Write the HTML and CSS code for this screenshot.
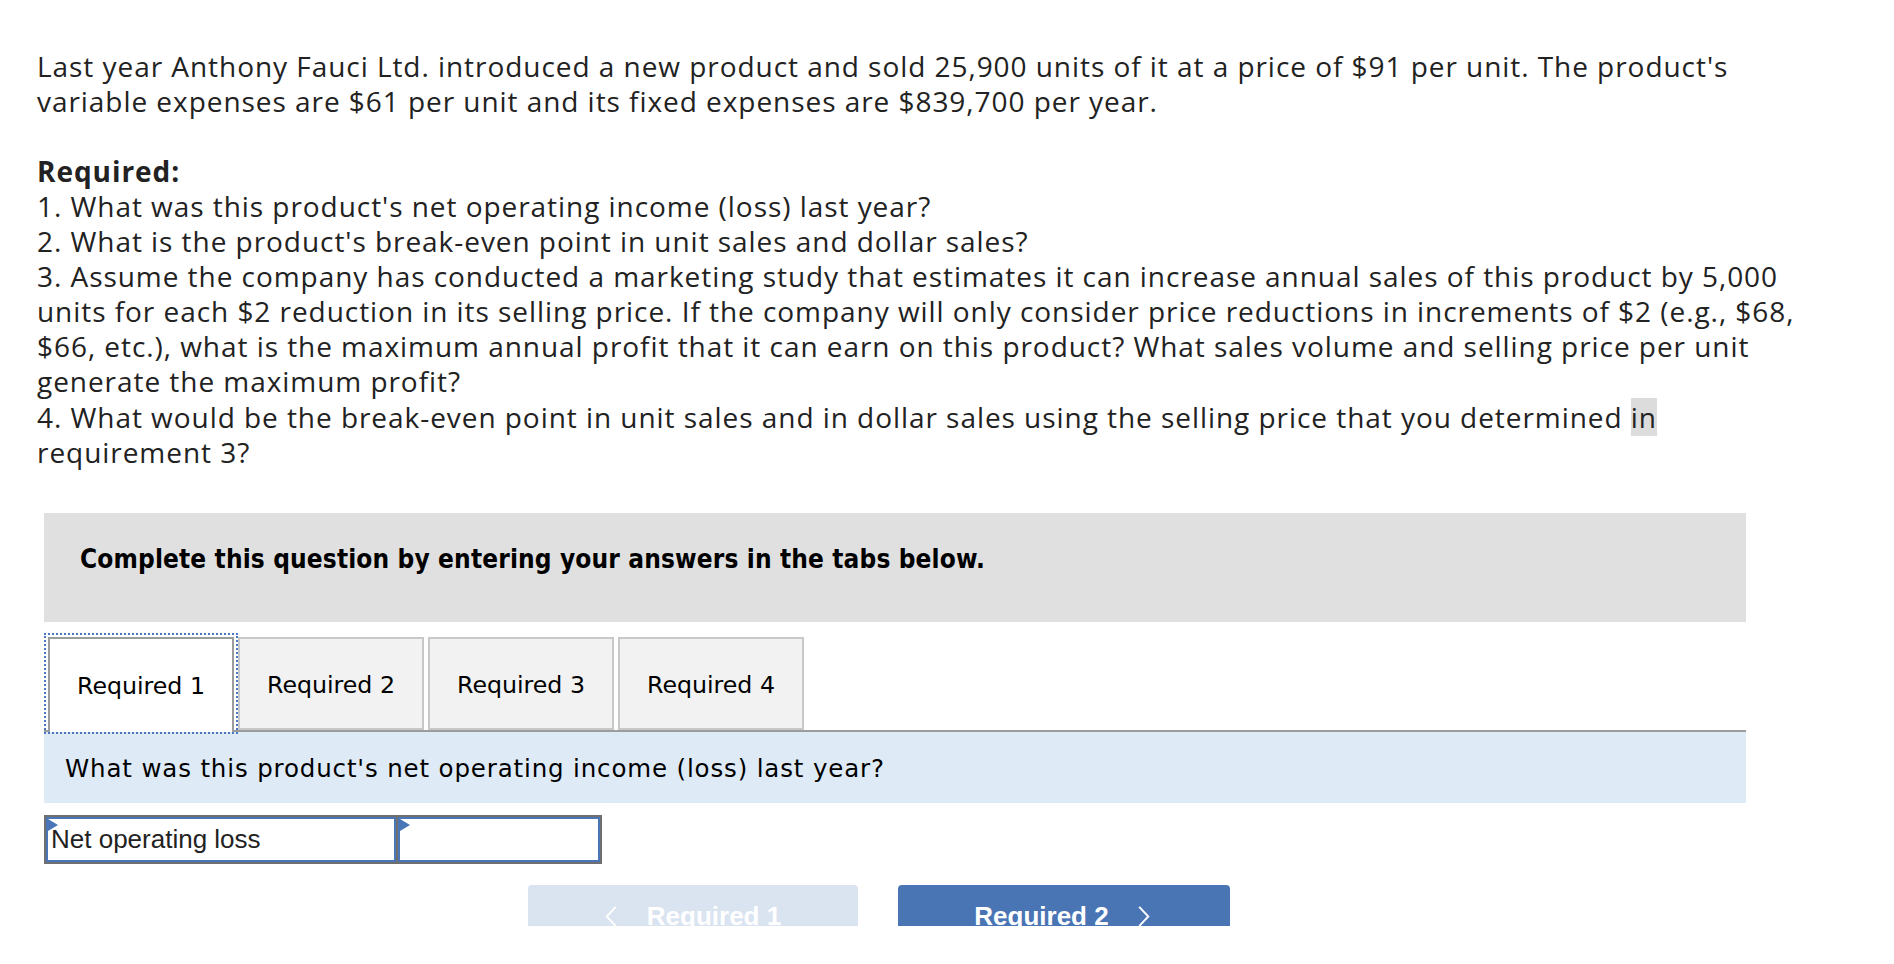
FILE: index.html
```html
<!DOCTYPE html>
<html lang="en">
<head>
<meta charset="utf-8">
<title>Break-even question</title>
<link rel="stylesheet" href="styles.css">
</head>
<body>
<div class="page">
  <div class="question">
    <p class="intro">Last year Anthony Fauci Ltd. introduced a new product and sold 25,900 units of it at a price of $91 per unit. The product's<br>variable expenses are $61 per unit and its fixed expenses are $839,700 per year.</p>
    <p class="req"><strong>Required:</strong><br>1. What was this product's net operating income (loss) last year?<br>2. What is the product's break-even point in unit sales and dollar sales?<br>3. Assume the company has conducted a marketing study that estimates it can increase annual sales of this product by 5,000<br>units for each $2 reduction in its selling price. If the company will only consider price reductions in increments of $2 (e.g., $68,<br>$66, etc.), what is the maximum annual profit that it can earn on this product? What sales volume and selling price per unit<br>generate the maximum profit?<br>4. What would be the break-even point in unit sales and in dollar sales using the selling price that you determined <span class="hl">in</span><br>requirement 3?</p>
  </div>
  <div class="answer">
    <div class="instr">Complete this question by entering your answers in the tabs below.</div>
    <div class="tabs">
      <div class="tab active">Required 1</div>
      <div class="tab">Required 2</div>
      <div class="tab">Required 3</div>
      <div class="tab">Required 4</div>
    </div>
    <div class="prompt">What was this product's net operating income (loss) last year?</div>
    <div class="entry">
      <div class="cell label"><svg class="flag" viewBox="0 0 10 12"><polygon points="0,0 10,6 0,12" fill="#4a76b8"/></svg>Net operating loss</div>
      <div class="cell value"><svg class="flag" viewBox="0 0 10 12"><polygon points="0,0 10,6 0,12" fill="#4a76b8"/></svg></div>
    </div>
    <div class="nav">
      <div class="btn prev"><svg class="chev" viewBox="0 0 12 22"><polyline points="11,1 1.5,11 11,21" fill="none" stroke="#fff" stroke-width="2"/></svg><span>Required 1</span></div>
      <div class="btn next"><span>Required 2</span><svg class="chev" viewBox="0 0 12 22"><polyline points="1,1 10.5,11 1,21" fill="none" stroke="#fff" stroke-width="2"/></svg></div>
    </div>
  </div>
</div>
</body>
</html>
```

FILE: styles.css
```css
html, body {
  margin: 0;
  background: #ffffff;
}

.page {
  padding: 48.6px 0 0 37px;
}

.question {
  font-family: "Open Sans", Lato, "Liberation Sans", sans-serif;
  font-size: 28px;
  line-height: 35.1px;
  letter-spacing: 0.95px;
  color: #222222;
  white-space: nowrap;
}

.question p {
  margin: 0;
}

.question .intro {
  margin-bottom: 35.1px;
}

.question strong {
  font-weight: 700;
}

.hl {
  background: #dcdcdc;
}

.answer {
  margin: 43px 0 0 7px;
  width: 1702px;
}

.instr {
  height: 109px;
  box-sizing: border-box;
  background: #e0e0e0;
  padding: 31px 0 0 36px;
  font-family: "DejaVu Sans Condensed", "DejaVu Sans", sans-serif;
  font-stretch: condensed;
  font-weight: bold;
  font-size: 26px;
  letter-spacing: 0.13px;
  color: #000000;
}

.tabs {
  display: flex;
  align-items: flex-start;
  gap: 4px;
  height: 93px;
  margin-top: 15px;
  padding-left: 4px;
  border-bottom: 2px solid #9c9c9c;
}

.tab {
  position: relative;
  width: 186px;
  height: 93px;
  box-sizing: border-box;
  border: 2px solid #c8c8c8;
  background: #f2f2f2;
  padding-top: 3px;
  display: flex;
  align-items: center;
  justify-content: center;
  font-family: "DejaVu Sans", sans-serif;
  font-size: 23.7px;
  color: #000000;
}

.tab.active {
  height: 95px;
  background: #ffffff;
  border-color: #9c9c9c;
  border-bottom: 0;
  padding-bottom: 2px;
}

.tab.active::after {
  content: "";
  position: absolute;
  left: -6px;
  right: -6px;
  top: -6px;
  bottom: -2px;
  border: 2px dotted #4a78c0;
}

.prompt {
  height: 71px;
  box-sizing: border-box;
  background: #deebf7;
  padding: 22px 0 0 21px;
  font-family: "DejaVu Sans", sans-serif;
  font-size: 24.5px;
  letter-spacing: 0.85px;
  color: #000000;
}

.entry {
  display: flex;
  gap: 2px;
  width: 558px;
  box-sizing: border-box;
  margin-top: 12px;
  padding: 2px;
  background: #6f6f6f;
}

.cell {
  position: relative;
  height: 45px;
  box-sizing: border-box;
  border: 2px solid #4a76b8;
  background: #ffffff;
  padding-left: 3px;
  font-family: "Liberation Sans", Arial, sans-serif;
  font-size: 26px;
  line-height: 41px;
  color: #222222;
  white-space: nowrap;
}

.cell.label {
  width: 350px;
}

.cell.value {
  flex: 1;
}

.flag {
  position: absolute;
  left: 0;
  top: 0;
  width: 10px;
  height: 12px;
}

.nav {
  display: flex;
  justify-content: center;
  gap: 40px;
  padding-right: 32px;
  margin-top: 21px;
  height: 41px;
  overflow: hidden;
}

.btn {
  width: 330px;
  height: 63px;
  flex: none;
  border-radius: 4px;
  display: flex;
  align-items: center;
  justify-content: center;
  gap: 30px;
  font-family: "Liberation Sans", Arial, sans-serif;
  font-weight: bold;
  font-size: 26px;
  color: #ffffff;
}

.btn.prev {
  background: #dae3f0;
}

.btn.next {
  width: 332px;
  gap: 29px;
  padding-right: 4px;
  box-sizing: border-box;
  background: #4a75b5;
}

.chev {
  width: 12px;
  height: 21px;
  flex: none;
}
```
